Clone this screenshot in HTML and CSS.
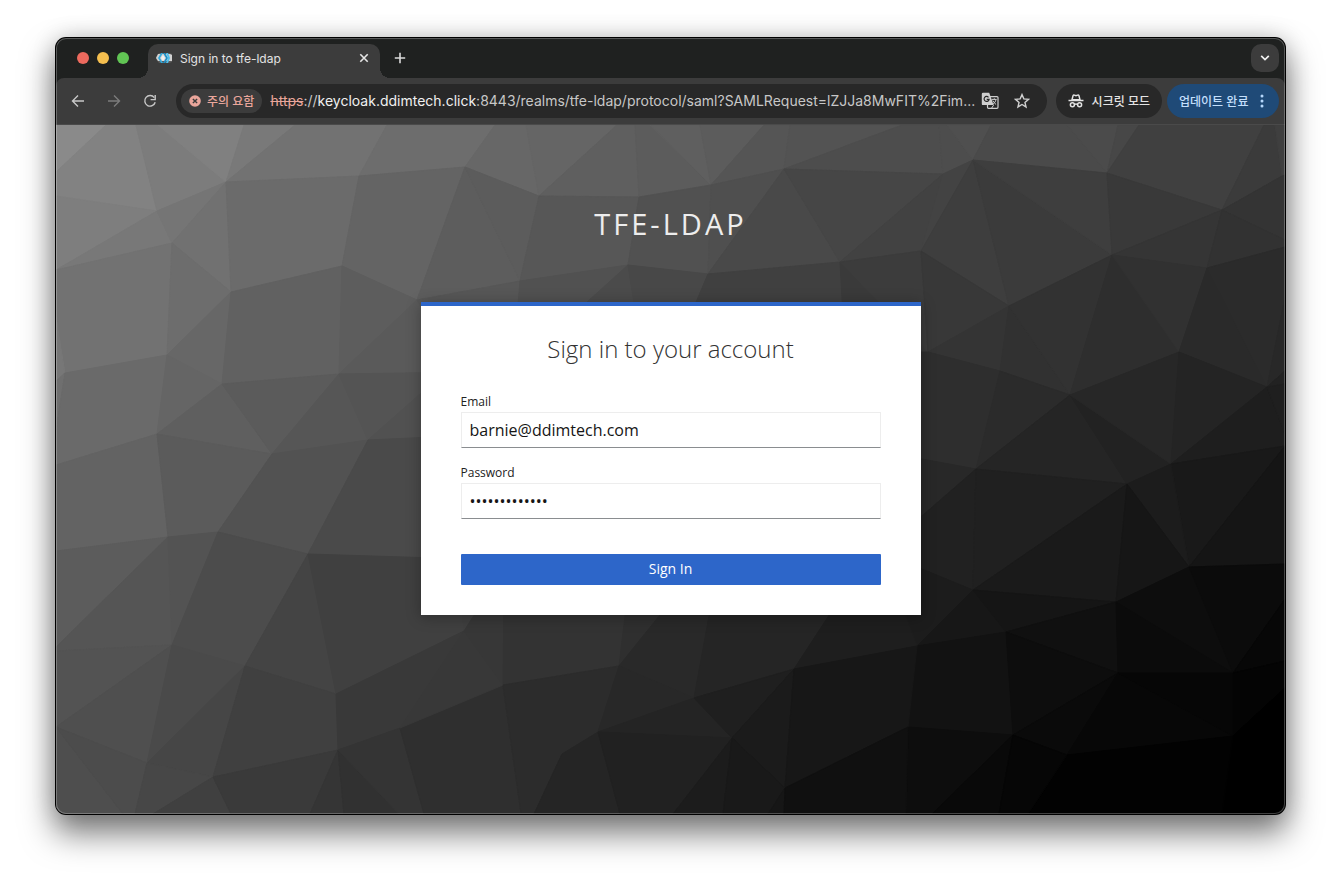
FILE: index.html
```html
<!DOCTYPE html>
<html lang="ko">
<head>
<meta charset="utf-8">
<meta name="viewport" content="width=device-width, initial-scale=1">
<title>Sign in to tfe-ldap</title>
<link rel="stylesheet" href="styles.css">
</head>
<body>
<div class="window">
  <header class="tab-strip">
    <div class="lights">
      <button class="light light-close" aria-label="Close window"></button>
      <button class="light light-min" aria-label="Minimize window"></button>
      <button class="light light-max" aria-label="Zoom window"></button>
    </div>
    <div class="tab">
      <svg class="favicon" width="16" height="16" viewBox="0 0 16 16" aria-hidden="true">
        <path d="M3 3h10l3 1v8l-3 1H3L0 9V7z" fill="#5a5a5a"/>
        <path d="M2 4h12l2 1v6H2L0 8z" fill="#d2d2d2"/>
        <path d="M5 3h2L4 8l3 5H5L2 8z" fill="#33a9dc"/>
        <path d="M7 3h2l3 5-3 5H7l3-5z" fill="#1b8fc8"/>
        <path d="M10 3h2l2 5-2 5h-2l2-5z" fill="#4fc0ec"/>
        <path d="M7 5l2 3-2 3-2-3z" fill="#efefef"/>
      </svg>
      <span class="tab-title">Sign in to tfe-ldap</span>
      <button class="icon-button tab-close" aria-label="Close tab">
        <svg width="10" height="10" viewBox="0 0 10 10"><path d="M1.3 1.3l7.4 7.4M8.7 1.3L1.3 8.7" stroke="#e6e6e6" stroke-width="1.6"/></svg>
      </button>
    </div>
    <button class="icon-button new-tab" aria-label="New tab">
      <svg width="12" height="12" viewBox="0 0 12 12"><path d="M6 .8v10.400M.8 6h10.400" stroke="#dadada" stroke-width="1.600"/></svg>
    </button>
    <button class="tab-search" aria-label="Search tabs">
      <svg width="10" height="8" viewBox="0 0 10 8"><path d="M1.200 1.800L5 5.600l3.800-3.800" fill="none" stroke="#f0f0f0" stroke-width="1.700"/></svg>
    </button>
  </header>

  <nav class="toolbar" aria-label="Browser">
    <div class="nav-buttons">
      <button class="icon-button" aria-label="Back">
        <svg width="14" height="14" viewBox="0 0 14 14"><path d="M13 7H1.800M7 1.500L1.500 7 7 12.500" fill="none" stroke="#c8c8c8" stroke-width="1.400"/></svg>
      </button>
      <button class="icon-button" aria-label="Forward" disabled>
        <svg width="14" height="14" viewBox="0 0 14 14"><path d="M1 7h11.200M7 1.500L12.500 7 7 12.500" fill="none" stroke="#7c7c7c" stroke-width="1.400"/></svg>
      </button>
      <button class="icon-button" aria-label="Reload">
        <svg width="14" height="14" viewBox="0 0 14 14"><path d="M11.300 3.600A5.300 5.300 0 1 0 12.200 8.300" fill="none" stroke="#c8c8c8" stroke-width="1.400"/><path d="M12.200 1v4.600H7.600" fill="none" stroke="#c8c8c8" stroke-width="1.400"/></svg>
      </button>
    </div>
    <div class="address-bar">
      <button class="warning-chip">
        <svg width="12" height="12" viewBox="0 0 12 12" aria-hidden="true"><circle cx="6" cy="6" r="5.800" fill="#eaa69b"/><path d="M3.900 3.900l4.200 4.200M8.100 3.900L3.900 8.100" stroke="#3c3c3c" stroke-width="1.400"/></svg>
        <span>주의 요함</span>
      </button>
      <a class="url" href="#"><s class="scheme">https</s><span class="separator">://</span><span class="host">keycloak.ddimtech.click</span>:8443/realms/tfe-ldap/protocol/saml?SAMLRequest=lZJJa8MwFIT%2Fim...</a>
      <button class="icon-button" aria-label="Translate this page">
        <svg width="18" height="18" viewBox="0 0 18 18">
          <rect x="6.500" y="4.600" width="10.500" height="11.700" rx="1" fill="none" stroke="#cfcfcf" stroke-width="1.200"/>
          <path d="M2 .8h6.200l4.400 12.300H2a1.200 1.200 0 0 1-1.200-1.200V2A1.200 1.200 0 0 1 2 .8z" fill="#cfcfcf"/>
          <path d="M7.500 5.300a2.500 2.500 0 1 0 .6 2H5.700" fill="none" stroke="#282828" stroke-width="1.200"/>
          <path d="M10.600 7.400h5M13.300 6.300v1.100M15 7.500c-.4 2-1.500 3.500-3 4.700M11.800 8.600c.7 1.500 1.800 2.600 3.300 3.900M12.600 13.100l-2 3" fill="none" stroke="#cfcfcf" stroke-width="1"/>
        </svg>
      </button>
      <button class="icon-button bookmark" aria-label="Bookmark this tab">
        <svg width="16" height="16" viewBox="0 0 16 16"><path d="M8 1.600l1.850 4.300 4.650.4-3.530 3.080 1.060 4.560L8 11.500l-4.030 2.440 1.060-4.560L1.500 6.300l4.650-.4z" fill="none" stroke="#d0d0d0" stroke-width="1.400"/></svg>
      </button>
    </div>
    <button class="pill incognito">
      <svg width="16" height="14" viewBox="0 0 16 14" aria-hidden="true">
        <path d="M4 5.800L5 1.900Q5.300.8 6.300 1.100L8 1.700l1.700-.6q1-.3 1.300.8l1 3.900z" fill="none" stroke="#e4e4e4" stroke-width="1.500"/>
        <path d="M.5 6.500h15" stroke="#e4e4e4" stroke-width="1.500"/>
        <circle cx="4.400" cy="10.800" r="2" fill="none" stroke="#e4e4e4" stroke-width="1.500"/>
        <circle cx="11.600" cy="10.800" r="2" fill="none" stroke="#e4e4e4" stroke-width="1.500"/>
        <path d="M6.400 10.500q1.600-1 3.200 0" fill="none" stroke="#e4e4e4" stroke-width="1.300"/>
      </svg>
      <span>시크릿 모드</span>
    </button>
    <button class="pill update">
      <span>업데이트 완료</span>
      <svg width="4" height="14" viewBox="0 0 4 14" aria-hidden="true" fill="#b5d7fb"><circle cx="2" cy="2" r="1.500"/><circle cx="2" cy="7" r="1.500"/><circle cx="2" cy="12" r="1.500"/></svg>
    </button>
  </nav>

  <main class="page">
    <svg class="mesh" viewBox="56 125 1229 689" preserveAspectRatio="none" aria-hidden="true">
      <path color="#8a8a8a" d="M56 125H106L56 172z"/>
      <path color="#828282" d="M106 125H136L157 211 56 196V172z"/>
      <path color="#7c7c7c" d="M136 125H158L226 182 157 211z"/>
      <path color="#808080" d="M158 125H244L226 182z"/>
      <path color="#797979" d="M244 125H295L226 182z"/>
      <path color="#727272" d="M295 125H387L359 176 226 182z"/>
      <path color="#6d6d6d" d="M387 125H495L465 167 359 176z"/>
      <path color="#7e7e7e" d="M56 196L157 211 56 270z"/>
      <path color="#787878" d="M56 270L157 211 172 243z"/>
      <path color="#757575" d="M157 211L226 182 172 243z"/>
      <path color="#717171" d="M226 182L231 292 172 243z"/>
      <path color="#6b6b6b" d="M226 182L359 176 342 266 231 292z"/>
      <path color="#646464" d="M359 176L465 167 417 300 342 266z"/>
      <path color="#727272" d="M56 270L172 243 167 355 65 373 56 317z"/>
      <path color="#777777" d="M56 317L65 373 56 381z"/>
      <path color="#6d6d6d" d="M172 243L231 292 167 355z"/>
      <path color="#676767" d="M231 292L222 384 167 355z"/>
      <path color="#616161" d="M231 292L342 266 339 374 222 384z"/>
      <path color="#5d5d5d" d="M342 266L417 300 339 374z"/>
      <path color="#6f6f6f" d="M56 381L65 373 56 430z"/>
      <path color="#6a6a6a" d="M65 373L167 355 157 434 56 465V430z"/>
      <path color="#656565" d="M167 355L222 384 157 434z"/>
      <path color="#5f5f5f" d="M222 384L272 454 157 434z"/>
      <path color="#5b5b5b" d="M222 384L339 374 272 454z"/>
      <path color="#565656" d="M339 374L368 440 272 454z"/>
      <path color="#5a5a5a" d="M417 300L470 372 339 374z"/>
      <path color="#545454" d="M339 374L470 372V350L368 440z"/>
      <path color="#515151" d="M368 440L470 350V436z"/>
      <path color="#636363" d="M56 465L157 434 168 537 56 551z"/>
      <path color="#5b5b5b" d="M157 434L272 454 218 532 168 537z"/>
      <path color="#525252" d="M272 454L368 440 308 554 218 532z"/>
      <path color="#4a4a4a" d="M368 440L500 434V560L308 554z"/>
      <path color="#5c5c5c" d="M56 551L168 537 56 647z"/>
      <path color="#555555" d="M168 537L172 645 56 651V647z"/>
      <path color="#535353" d="M168 537L218 532 172 645z"/>
      <path color="#4c4c4c" d="M218 532L308 554 245 666 172 645z"/>
      <path color="#444444" d="M308 554L336 694 245 666z"/>
      <path color="#404040" d="M308 554L500 560 464 631 336 694z"/>
      <path color="#535353" d="M56 651L172 645 56 727z"/>
      <path color="#4f4f4f" d="M172 645L147 763 56 727z"/>
      <path color="#4a4a4a" d="M172 645L245 666 147 763z"/>
      <path color="#464646" d="M245 666L213 777 147 763z"/>
      <path color="#404040" d="M245 666L336 694 338 750 213 777z"/>
      <path color="#393939" d="M336 694L464 631 400 728 338 750z"/>
      <path color="#4e4e4e" d="M56 727L123 814H56z"/>
      <path color="#4c4c4c" d="M56 727L147 763 135 814H123z"/>
      <path color="#474747" d="M147 763L213 777 153 814H135z"/>
      <path color="#404040" d="M213 777L231 814H153z"/>
      <path color="#3a3a3a" d="M213 777L338 750 310 814H231z"/>
      <path color="#353535" d="M338 750L344 814H310z"/>
      <path color="#313131" d="M338 750L399 814H344z"/>
      <path color="#343434" d="M338 750L400 728 424 814H399z"/>
      <path color="#2f2f2f" d="M400 728L503 685 521 814H424z"/>
      <path color="#383838" d="M400 728L464 631 503 685z"/>

      <path color="#676767" d="M495 125H526L539 196 465 167z"/>
      <path color="#656565" d="M526 125H617L539 196z"/>
      <path color="#5f5f5f" d="M617 125H635L639 197 539 196z"/>
      <path color="#5c5c5c" d="M635 125H650L711 185 639 197z"/>
      <path color="#5f5f5f" d="M650 125H700L711 185z"/>
      <path color="#5c5c5c" d="M700 125H764L711 185z"/>
      <path color="#555555" d="M764 125H790L784 169 711 185z"/>
      <path color="#535353" d="M790 125H902L784 169z"/>
      <path color="#4d4d4d" d="M902 125H939L943 174 784 169z"/>
      <path color="#5d5d5d" d="M465 167L520 281 417 300z"/>
      <path color="#5c5c5c" d="M465 167L539 196 520 281z"/>
      <path color="#575757" d="M539 196L639 197 628 265 520 281z"/>
      <path color="#515151" d="M639 197L711 185 708 274 628 265z"/>
      <path color="#4f4f4f" d="M711 185L784 169 708 274z"/>
      <path color="#494949" d="M784 169L840 262 708 274z"/>
      <path color="#464646" d="M784 169L943 174 840 262z"/>
      <path color="#424242" d="M943 174L921 251 840 262z"/>
      <path color="#575757" d="M417 300L520 281 515 340H440z"/>
      <path color="#515151" d="M520 281L628 265 545 340H515z"/>
      <path color="#4b4b4b" d="M628 265L640 340H545z"/>
      <path color="#484848" d="M628 265L708 274 680 340H640z"/>
      <path color="#404040" d="M708 274L840 262 845 340H680z"/>
      <path color="#3a3a3a" d="M840 262L928 352H845z"/>
      <path color="#3c3c3c" d="M840 262L921 251 928 352z"/>

      <path color="#4d4d4d" d="M939 125H947L973 160 943 174z"/>
      <path color="#4f4f4f" d="M947 125H991L973 160z"/>
      <path color="#4a4a4a" d="M991 125H1067L1107 173 973 160z"/>
      <path color="#4b4b4b" d="M1067 125H1118L1107 173z"/>
      <path color="#474747" d="M1118 125H1139L1107 173z"/>
      <path color="#404040" d="M1139 125H1264L1222 210 1107 173z"/>
      <path color="#3b3b3b" d="M1264 125H1275L1282 176 1222 210z"/>
      <path color="#3f3f3f" d="M1275 125H1285V175L1282 176z"/>
      <path color="#434343" d="M943 174L973 160 921 251z"/>
      <path color="#3e3e3e" d="M973 160L1009 306 921 251z"/>
      <path color="#3b3b3b" d="M973 160L1112 255 1009 306z"/>
      <path color="#3e3e3e" d="M973 160L1107 173 1112 255z"/>
      <path color="#393939" d="M1107 173L1222 210 1112 255z"/>
      <path color="#343434" d="M1222 210L1282 176 1285 175V240z"/>
      <path color="#353535" d="M1222 210L1207 268 1112 255z"/>
      <path color="#323232" d="M1222 210L1285 240V247L1207 268z"/>
      <path color="#383838" d="M921 251L1009 306 928 352z"/>
      <path color="#343434" d="M1009 306L1000 371 928 352z"/>
      <path color="#313131" d="M1009 306L1070 395 1000 371z"/>
      <path color="#323232" d="M1009 306L1112 255 1070 395z"/>
      <path color="#2e2e2e" d="M1112 255L1179 352 1070 395z"/>
      <path color="#313131" d="M1112 255L1207 268 1179 352z"/>
      <path color="#2a2a2a" d="M1207 268L1267 387 1179 352z"/>
      <path color="#2b2b2b" d="M1207 268L1285 247V297L1267 387z"/>
      <path color="#282828" d="M1285 297V371L1267 387z"/>
      <path color="#222222" d="M1267 387L1285 371V384z"/>
      <path color="#2e2e2e" d="M928 352L1000 371 976 469 900 455V352z"/>
      <path color="#2b2b2b" d="M1000 371L1070 395 976 469z"/>
      <path color="#252525" d="M1070 395L1127 484 976 469z"/>
      <path color="#222222" d="M1070 395L1171 464 1127 484z"/>
      <path color="#272727" d="M1070 395L1179 352 1171 464z"/>
      <path color="#242424" d="M1179 352L1267 387 1171 464z"/>
      <path color="#1e1e1e" d="M1267 387L1285 434V446L1171 464z"/>
      <path color="#1f1f1f" d="M1267 387L1285 384V434z"/>
      <path color="#191919" d="M1171 464L1285 446 1189 567z"/>
      <path color="#1c1c1c" d="M1127 484L1171 464 1189 567z"/>
      <path color="#282828" d="M900 455L976 469 900 535z"/>
      <path color="#212121" d="M976 469L973 590 900 560V535z"/>
      <path color="#202020" d="M976 469L1127 484 973 590z"/>
      <path color="#1a1a1a" d="M1127 484L1116 602 973 590z"/>
      <path color="#161616" d="M1127 484L1189 567 1116 602z"/>
      <path color="#151515" d="M1285 446V564L1189 567z"/>
      <path color="#0d0d0d" d="M1189 567L1233 673 1116 602z"/>
      <path color="#0b0b0b" d="M1189 567L1285 564V599L1233 673z"/>
      <path color="#070707" d="M1285 599V661L1233 673z"/>
      <path color="#1c1c1c" d="M900 560L973 590 917 646 900 610z"/>
      <path color="#171717" d="M973 590L1006 632 917 646z"/>
      <path color="#151515" d="M973 590L1116 602 1006 632z"/>
      <path color="#101010" d="M1116 602L1118 673 1006 632z"/>
      <path color="#0b0b0b" d="M1116 602L1233 673H1118z"/>
      <path color="#121212" d="M917 646L1006 632 1013 735 908 727z"/>
      <path color="#0d0d0d" d="M1006 632L1118 673 1013 735z"/>
      <path color="#0a0a0a" d="M1118 673L1067 755 1013 735z"/>
      <path color="#070707" d="M1118 673L1233 736 1067 755z"/>
      <path color="#060606" d="M1118 673H1233V736z"/>
      <path color="#040404" d="M1233 673L1285 661V688L1233 736z"/>
      <path color="#000000" d="M1285 688V814H1222L1233 736z"/>
      <path color="#020202" d="M1233 736L1222 814H1028L1067 755z"/>
      <path color="#0d0d0d" d="M908 727L1013 735 932 814H906z"/>
      <path color="#090909" d="M1013 735L999 814H932z"/>
      <path color="#060606" d="M1013 735L1067 755 1028 814H999z"/>

      <path color="#3f3f3f" d="M464 631L462 600H484z"/>
      <path color="#373737" d="M484 600H504L503 685 464 631z"/>
      <path color="#333333" d="M504 600H627L619 666 503 685z"/>
      <path color="#2f2f2f" d="M627 600H672L619 666z"/>
      <path color="#292929" d="M672 600H712L694 698 619 666z"/>
      <path color="#252525" d="M712 600H839L794 669 694 698z"/>
      <path color="#1e1e1e" d="M839 600H900L917 646 794 669z"/>
      <path color="#2c2c2c" d="M503 685L619 666 598 732 562 754 534 814H521z"/>
      <path color="#282828" d="M619 666L694 698 598 732z"/>
      <path color="#242424" d="M694 698L732 738 598 732z"/>
      <path color="#1f1f1f" d="M694 698L794 669 732 738z"/>
      <path color="#1b1b1b" d="M794 669L785 788 732 738z"/>
      <path color="#171717" d="M794 669L917 646 908 727 785 788z"/>
      <path color="#252525" d="M598 732L620 814H534L562 754z"/>
      <path color="#212121" d="M598 732L732 738 673 814H620z"/>
      <path color="#1c1c1c" d="M732 738L723 814H673z"/>
      <path color="#191919" d="M732 738L785 788 768 814H723z"/>
      <path color="#161616" d="M785 788L784 814H768z"/>
      <path color="#101010" d="M785 788L908 727 906 814H784z"/>
    </svg>
    <div class="login">
      <h1 class="realm">tfe-ldap</h1>
      <section class="card">
        <h2 class="card-title">Sign in to your account</h2>
        <form class="form">
          <div class="field">
            <label for="email">Email</label>
            <input id="email" type="text" value="barnie@ddimtech.com">
          </div>
          <div class="field">
            <label for="password">Password</label>
            <input id="password" type="password" value="correcthorse1">
          </div>
          <button class="submit" type="button">Sign In</button>
        </form>
      </section>
    </div>
  </main>
</div>
</body>
</html>
```
FILE: styles.css
```css
* {
  box-sizing: border-box;
}

body {
  margin: 0;
  min-height: 100vh;
  display: flex;
  padding: 38px 56px 74px;
  background: #fff;
  font-family: Inter, "Noto Sans CJK KR", sans-serif;
}

button {
  border: 0;
  padding: 0;
  background: none;
  font: inherit;
  color: inherit;
}

svg {
  display: block;
  flex: none;
}

.window {
  position: relative;
  flex: 1;
  min-width: 0;
  display: flex;
  flex-direction: column;
  border-radius: 10px;
  background: #1f2120;
  box-shadow: 0 0 0 1px #000, 0 18px 32px 2px rgba(0, 0, 0, .5), 0 0 24px rgba(0, 0, 0, .2);
}

.window::after {
  content: "";
  position: absolute;
  inset: 0;
  border-radius: 10px;
  box-shadow: inset 0 0 0 1px rgba(255, 255, 255, .25);
  pointer-events: none;
}

.tab-strip {
  display: flex;
  align-items: center;
  height: 40px;
  padding: 0 6px 0 21px;
}

.lights {
  display: flex;
  gap: 8px;
  margin-right: 19px;
}

.light {
  width: 12px;
  height: 12px;
  border-radius: 50%;
}

.light-close { background: #ed6a5e; }
.light-min { background: #f5bf4f; }
.light-max { background: #61c554; }

.tab {
  position: relative;
  align-self: flex-end;
  display: flex;
  align-items: center;
  gap: 8px;
  width: 232px;
  height: 34px;
  padding: 0 10px 6px 8px;
  border-radius: 10px 10px 0 0;
  background: #3c3c3c;
  color: #e3e3e3;
  font-size: 12px;
}

.tab::before,
.tab::after {
  content: "";
  position: absolute;
  bottom: 0;
  width: 10px;
  height: 10px;
}

.tab::before {
  right: 100%;
  background: radial-gradient(circle at 0 0, transparent 10px, #3c3c3c 10px);
}

.tab::after {
  left: 100%;
  background: radial-gradient(circle at 100% 0, transparent 10px, #3c3c3c 10px);
}

.tab-title {
  flex: 1;
}

.icon-button {
  display: grid;
  place-items: center;
}

.tab-close {
  width: 12px;
  height: 16px;
}

.new-tab {
  width: 28px;
  height: 28px;
  margin-left: 6px;
}

.tab-search {
  display: grid;
  place-items: center;
  width: 28px;
  height: 28px;
  margin-left: auto;
  border-radius: 10px;
  background: #3c3c3c;
}

.toolbar {
  display: flex;
  align-items: center;
  height: 47px;
  padding: 0 6px 1px 15px;
  border-radius: 8px 8px 0 0;
  border-bottom: 1px solid #4a4a4a;
  background: #3c3c3c;
  font-size: 12px;
  font-weight: 500;
}

.nav-buttons {
  display: flex;
  gap: 22px;
  margin-right: 19px;
}

.address-bar {
  flex: 1;
  min-width: 0;
  display: flex;
  align-items: center;
  height: 34px;
  padding: 0 16px 0 5px;
  margin-right: 9px;
  border-radius: 17px;
  background: #282828;
}

.address-bar .icon-button {
  width: 18px;
}

.address-bar .bookmark {
  margin-left: 14px;
}

.warning-chip {
  display: flex;
  align-items: center;
  gap: 6px;
  height: 24px;
  padding: 0 8px;
  margin-right: 8px;
  border-radius: 12px;
  background: #3c3c3c;
  color: #eaa69b;
  white-space: nowrap;
}

.url {
  flex: 1;
  min-width: 0;
  overflow: hidden;
  text-overflow: ellipsis;
  white-space: nowrap;
  color: #c7c7c7;
  font-size: 14px;
  font-weight: 400;
  text-decoration: none;
}

.scheme {
  color: #eaa69b;
}

.host {
  color: #f0f0f0;
}

.pill {
  display: flex;
  align-items: center;
  height: 34px;
  border-radius: 17px;
  white-space: nowrap;
}

.incognito {
  gap: 8px;
  padding: 0 12px;
  margin-right: 5px;
  background: #282828;
  color: #e4e4e4;
}

.update {
  gap: 12px;
  padding: 0 14px 0 12px;
  background: #1f4a77;
  color: #c3dffc;
  min-width: 112px;
}

.page {
  position: relative;
  flex: 1;
  overflow: hidden;
  border-radius: 0 0 10px 10px;
  background: linear-gradient(135deg, #888, #000);
  font-family: "Open Sans", sans-serif;
}

.mesh {
  position: absolute;
  inset: 0;
  width: 100%;
  height: 100%;
  fill: currentColor;
  stroke: currentColor;
  stroke-width: 1;
}

.login {
  position: relative;
  display: flex;
  flex-direction: column;
  align-items: center;
  gap: 58px;
  padding: 79px 20px 40px;
}

.realm {
  margin: 0;
  color: #ededed;
  font-size: 29px;
  font-weight: 400;
  line-height: 40px;
  letter-spacing: 3px;
  text-transform: uppercase;
}

.card {
  width: 100%;
  max-width: 500px;
  padding: 26px 40px 30px;
  border-top: 4px solid #2d66c9;
  background: #fff;
  box-shadow: 0 2px 14px rgba(0, 0, 0, .3);
}

.card-title {
  margin: 0 0 28px;
  color: #333;
  font-size: 24px;
  font-weight: 300;
  line-height: 34px;
  text-align: center;
}

.form {
  display: flex;
  flex-direction: column;
  gap: 17px;
}

.field {
  display: flex;
  flex-direction: column;
}

.field label {
  height: 18px;
  color: #222;
  font-size: 12px;
  line-height: 16px;
}

.field input {
  height: 36px;
  padding: 0 8px;
  border: 1px solid #ededed;
  border-bottom-color: #8a8d90;
  border-radius: 0;
  outline: 0;
  background: #fff;
  color: #151515;
  font: 16px "Open Sans", sans-serif;
}

.submit {
  height: 31px;
  padding-bottom: 2px;
  margin-top: 18px;
  border-radius: 1px;
  background: #2d66c9;
  color: #fff;
  font-size: 14px;
  font-weight: 400;
}
```
